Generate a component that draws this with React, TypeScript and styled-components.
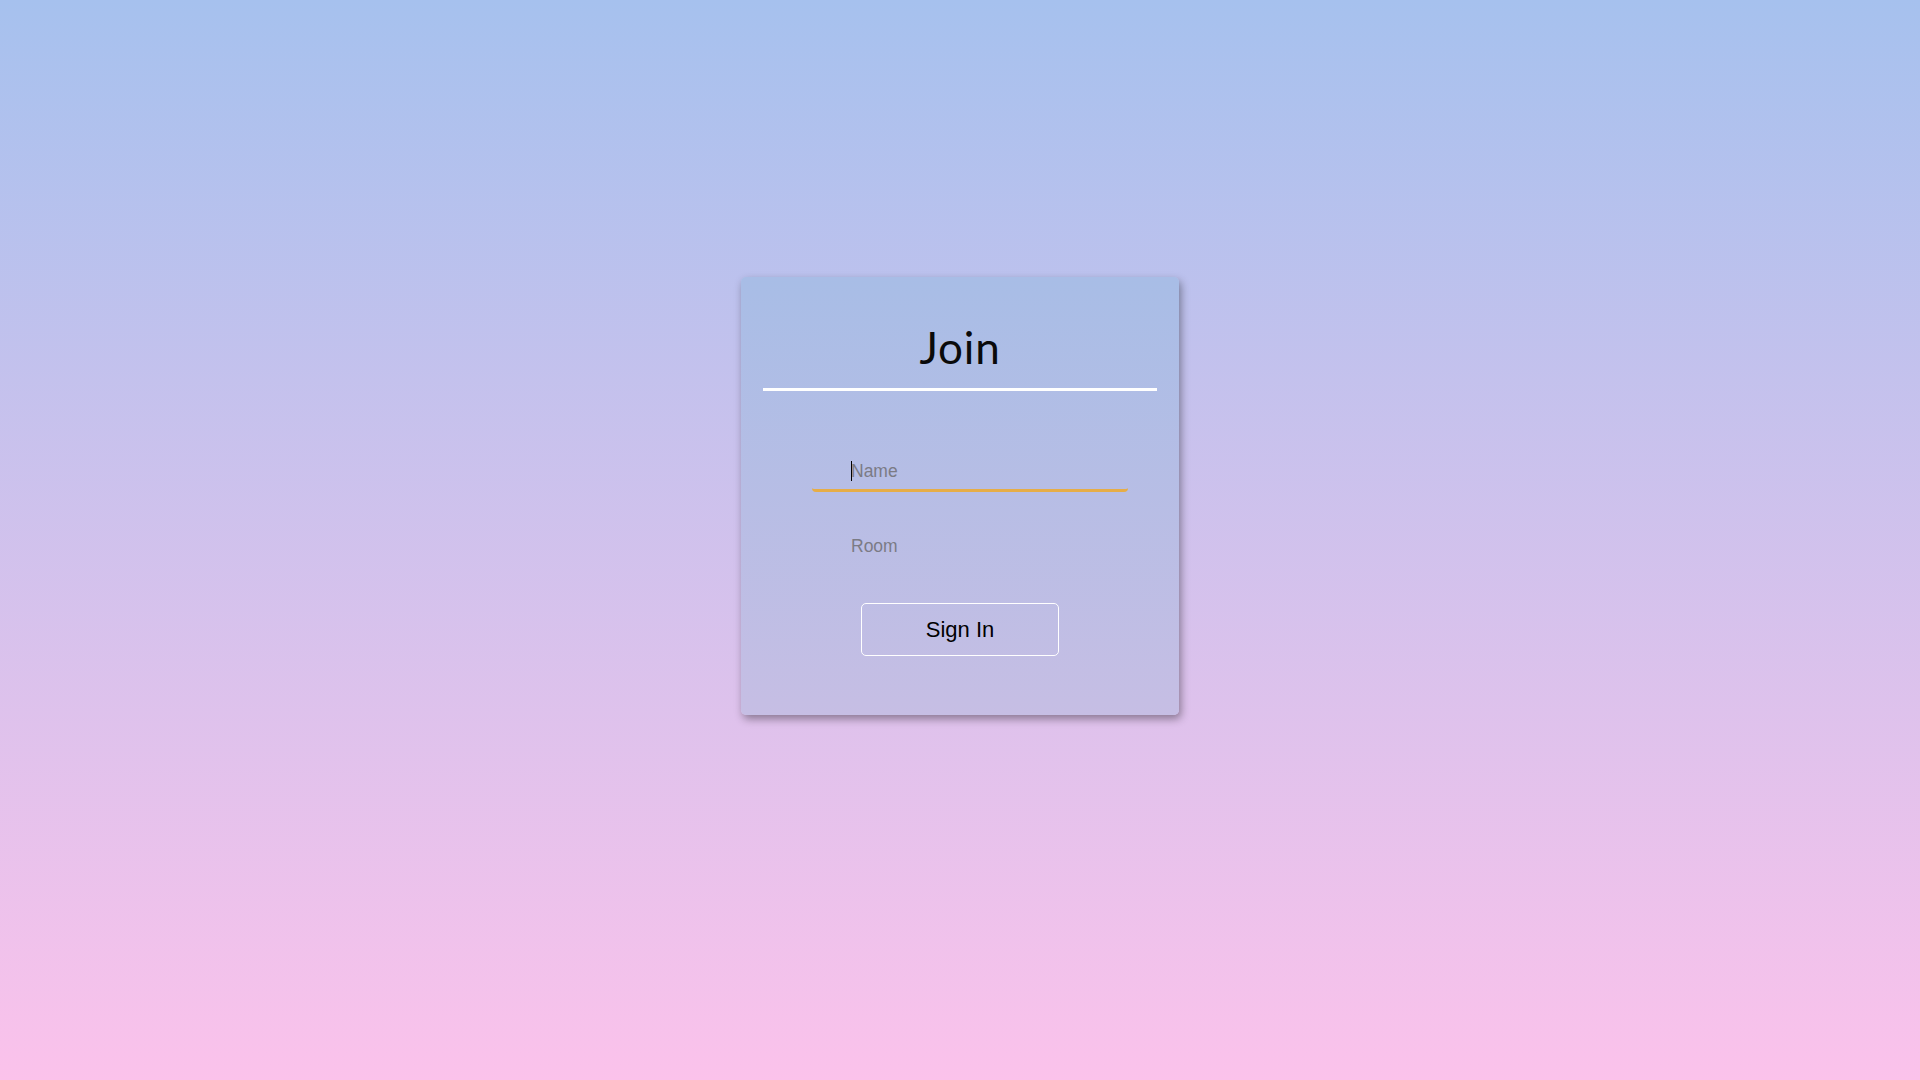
import React from "react";
import styled, { createGlobalStyle } from "styled-components";

const GlobalStyle = createGlobalStyle`
  html, body { margin: 0; padding: 0; }
  body {
    font-family: "Liberation Sans", Arial, sans-serif;
    min-height: 100vh;
    background: linear-gradient(to bottom, #a6c1ee 0%, #fbc2eb 100%);
  }
  * { box-sizing: border-box; }
`;

const Page = styled.main`
  min-height: 100vh;
  display: flex;
  justify-content: center;
  align-items: flex-start;
  padding-top: 277px;
`;

const Card = styled.section`
  width: 438px;
  height: 438px;
  border-radius: 5px;
  background: linear-gradient(to bottom, #a8bde6 0%, #c6bee4 100%);
  box-shadow: 2px 4px 8px rgba(0, 0, 0, 0.38);
  padding: 44px 22px 0;
  display: flex;
  flex-direction: column;
`;

const Title = styled.h1`
  margin: 0;
  font-family: Lato, "Open Sans", sans-serif;
  font-weight: 400;
  font-size: 44px;
  line-height: 52px;
  letter-spacing: 0.8px;
  text-align: center;
  color: #0a0a0a;
`;

const Divider = styled.hr`
  margin: 15px 0 0;
  border: none;
  height: 3px;
  background: #ffffff;
`;

const Form = styled.form`
  display: flex;
  flex-direction: column;
  margin-top: 62px;
`;

const FieldWrap = styled.div`
  position: relative;
  width: 316px;
  margin-left: 49px;

  & + & {
    margin-top: 36px;
  }
`;

const Field = styled.input<{ $active?: boolean }>`
  display: block;
  width: 100%;
  height: 39px;
  padding: 8px 0 8px 39px;
  font-family: "Liberation Sans", Arial, sans-serif;
  font-size: 17.5px;
  line-height: 20px;
  color: #222;
  background: transparent;
  border: none;
  border-bottom: 3px solid ${(p) => (p.$active ? "#e6ad47" : "transparent")};
  border-radius: 4px;
  outline: none;
  caret-color: #000;

  &::placeholder {
    color: #7b7b85;
    opacity: 1;
  }
`;

const Caret = styled.span`
  position: absolute;
  left: 39px;
  top: 8px;
  width: 1px;
  height: 20px;
  background: #000;
  pointer-events: none;
`;

const ButtonRow = styled.div`
  display: flex;
  justify-content: center;
  margin-top: 36px;
`;

const SignInButton = styled.button`
  width: 198px;
  height: 53px;
  border: 1px solid #ffffff;
  border-radius: 5px;
  background: transparent;
  font-family: "Liberation Sans", Arial, sans-serif;
  font-size: 22px;
  color: #000;
  cursor: pointer;
`;

export default function App() {
  return (
    <>
      <GlobalStyle />
      <Page>
        <Card>
          <Title>Join</Title>
          <Divider />
          <Form onSubmit={(e) => e.preventDefault()}>
            <FieldWrap>
              <Field $active placeholder="Name" type="text" />
              <Caret />
            </FieldWrap>
            <FieldWrap>
              <Field placeholder="Room" type="text" />
            </FieldWrap>
            <ButtonRow>
              <SignInButton type="submit">Sign In</SignInButton>
            </ButtonRow>
          </Form>
        </Card>
      </Page>
    </>
  );
}
